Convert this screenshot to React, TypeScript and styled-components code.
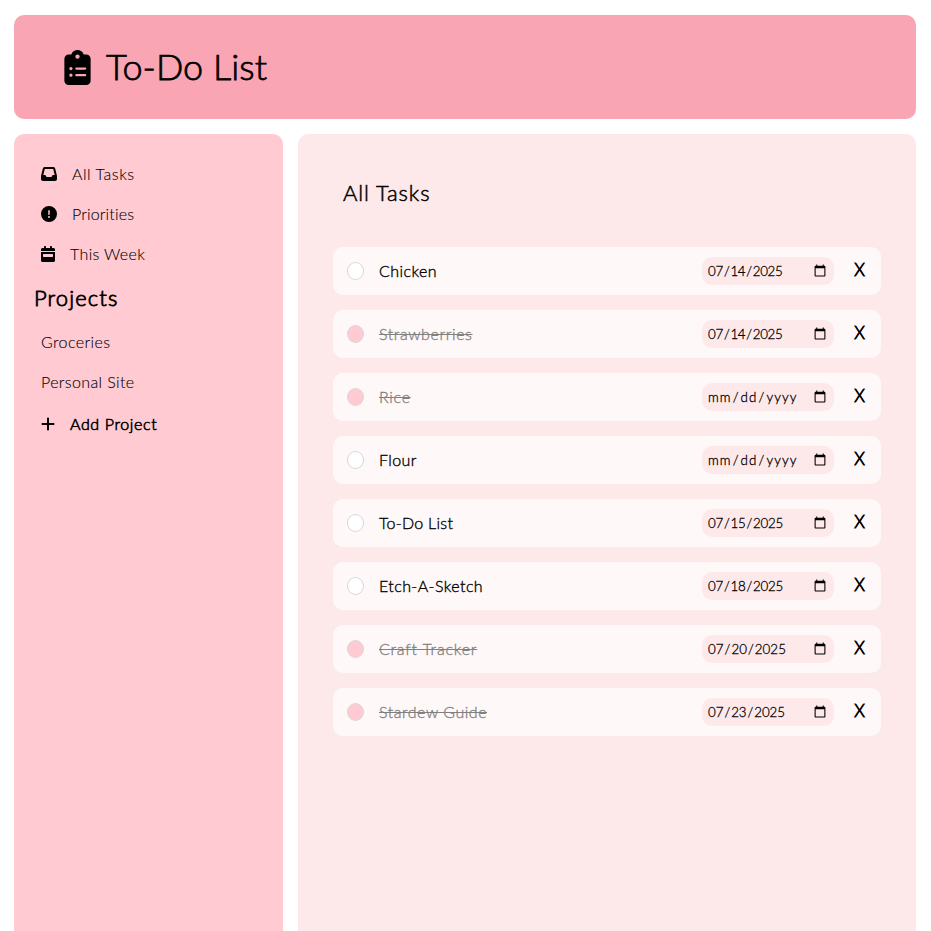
import React from 'react';
import styled, { createGlobalStyle } from 'styled-components';
import {
  FaClipboardList,
  FaInbox,
  FaCircleExclamation,
  FaCalendarWeek,
  FaPlus,
} from 'react-icons/fa6';

const GlobalStyle = createGlobalStyle`
  *, *::before, *::after { box-sizing: border-box; }
  body {
    margin: 0;
    background: #fff;
    color: #000;
    font-family: Lato, 'Open Sans', sans-serif;
    font-weight: 300;
    overflow: hidden;
  }
`;

const Page = styled.div`
  display: grid;
  grid-template: 104px 1fr / 269px 1fr;
  gap: 15px;
  height: 100vh;
  padding: 15px 15px 0 14px;
`;

const Header = styled.header`
  grid-column: 1 / -1;
  display: flex;
  align-items: center;
  gap: 15px;
  padding-left: 50px;
  border-radius: 10px;
  background: #f9a5b3;

  svg {
    width: 27px;
    height: 35px;
    margin-top: 1px;
  }
`;

const Title = styled.h1`
  margin: 0;
  padding-bottom: 2px;
  font-size: 36px;
  line-height: 45px;
  font-weight: 300;
  letter-spacing: 0.05px;
  -webkit-text-stroke: 0.75px #000;
`;

const Sidebar = styled.aside`
  display: flex;
  flex-direction: column;
  padding: 20px 20px 0;
  border-radius: 10px 10px 0 0;
  background: #ffcad2;
`;

const NavItem = styled.button<{ $track: number; $strong?: boolean; $iconWidth?: number }>`
  display: flex;
  align-items: center;
  gap: 15px;
  height: ${(p) => (p.$strong ? 44 : 40)}px;
  padding: 0 7px;
  border: 0;
  background: none;
  color: inherit;
  font: inherit;
  font-size: 16px;
  letter-spacing: ${(p) => p.$track}px;
  -webkit-text-stroke: ${(p) => (p.$strong ? 0.6 : 0.1)}px #000;

  svg {
    flex: none;
    width: ${(p) => p.$iconWidth ?? 16}px;
    height: 16px;
  }
`;

const Label = styled.span`
  padding-bottom: 2px;
`;

const SectionTitle = styled.h2`
  margin: 0;
  height: 48px;
  font-size: 22px;
  line-height: 48px;
  font-weight: 300;
  letter-spacing: 1.1px;
  -webkit-text-stroke: 0.8px #000;
`;

const Main = styled.main`
  display: flex;
  flex-direction: column;
  padding: 35px 35px 0;
  border-radius: 10px 10px 0 0;
  background: #fee9ea;
`;

const ListTitle = styled.h2`
  margin: 0 0 30px;
  padding: 10px;
  font-size: 22px;
  line-height: 28px;
  font-weight: 300;
  letter-spacing: 0.9px;
  -webkit-text-stroke: 0.5px #000;
`;

const TaskList = styled.ul`
  display: flex;
  flex-direction: column;
  gap: 15px;
  margin: 0;
  padding: 0;
  list-style: none;
`;

const TaskRow = styled.li`
  display: flex;
  align-items: center;
  height: 48px;
  padding: 0 15px 0 14px;
  border-radius: 10px;
  background: #fef8f8;
`;

const Check = styled.button<{ $done?: boolean }>`
  width: 17px;
  height: 18px;
  padding: 0;
  border: 1px solid #d8d8d8;
  border-radius: 50%;
  background: ${(p) => (p.$done ? '#ffcad2' : '#fff')};
`;

const TaskName = styled.span<{ $done?: boolean; $track: number }>`
  flex: 1;
  margin-left: 15px;
  padding-bottom: 2px;
  font-size: 16px;
  letter-spacing: ${(p) => p.$track}px;
  color: ${(p) => (p.$done ? '#808080' : '#000')};
  text-decoration: ${(p) => (p.$done ? 'line-through' : 'none')};
  -webkit-text-stroke: ${(p) => (p.$done ? '0.3px #808080' : '0.35px #000')};
`;

const DueDate = styled.input<{ $track: number }>`
  width: 132px;
  height: 28px;
  padding: 0 5px;
  border: 0;
  border-radius: 10px;
  background: #fee9ea;
  color: #000;
  font: 300 13.333px Lato, sans-serif;
  letter-spacing: ${(p) => p.$track}px;
  -webkit-text-stroke: 0.3px #000;

  &::-webkit-calendar-picker-indicator {
    width: 14px;
    height: 14px;
  }
`;

const Remove = styled.button`
  width: 12px;
  margin: 0 0 0 20px;
  padding: 0 1px 3px 0;
  border: 0;
  background: none;
  color: #000;
  font: 300 17px Lato, sans-serif;
  text-align: center;
  -webkit-text-stroke: 0.85px #000;
`;

type Task = { name: string; track: number; date: string; dateTrack: number; done?: boolean };

const tasks: Task[] = [
  { name: 'Chicken', track: 0.45, date: '2025-07-14', dateTrack: -0.3 },
  { name: 'Strawberries', track: 0.6, date: '2025-07-14', dateTrack: -0.3, done: true },
  { name: 'Rice', track: 0.7, date: '', dateTrack: 1.1, done: true },
  { name: 'Flour', track: 0.4, date: '', dateTrack: 1.1 },
  { name: 'To-Do List', track: 0.28, date: '2025-07-15', dateTrack: -0.25 },
  { name: 'Etch-A-Sketch', track: 0.42, date: '2025-07-18', dateTrack: -0.25 },
  { name: 'Craft Tracker', track: 0.8, date: '2025-07-20', dateTrack: 0.05, done: true },
  { name: 'Stardew Guide', track: 0.53, date: '2025-07-23', dateTrack: -0.05, done: true },
];

export default function App() {
  return (
    <>
      <GlobalStyle />
      <Page>
        <Header>
          <FaClipboardList />
          <Title>To-Do List</Title>
        </Header>
        <Sidebar>
          <NavItem $track={0.55}><FaInbox /><Label>All Tasks</Label></NavItem>
          <NavItem $track={0.15}><FaCircleExclamation /><Label>Priorities</Label></NavItem>
          <NavItem $track={0.35} $iconWidth={14}><FaCalendarWeek /><Label>This Week</Label></NavItem>
          <SectionTitle>Projects</SectionTitle>
          <NavItem $track={0.4}><Label>Groceries</Label></NavItem>
          <NavItem $track={0.38}><Label>Personal Site</Label></NavItem>
          <NavItem $track={0.62} $iconWidth={14} $strong><FaPlus /><Label>Add Project</Label></NavItem>
        </Sidebar>
        <Main>
          <ListTitle>All Tasks</ListTitle>
          <TaskList>
            {tasks.map((t) => (
              <TaskRow key={t.name}>
                <Check $done={t.done} aria-label={t.name} />
                <TaskName $done={t.done} $track={t.track}>{t.name}</TaskName>
                <DueDate type="date" defaultValue={t.date} $track={t.dateTrack} />
                <Remove>X</Remove>
              </TaskRow>
            ))}
          </TaskList>
        </Main>
      </Page>
    </>
  );
}
